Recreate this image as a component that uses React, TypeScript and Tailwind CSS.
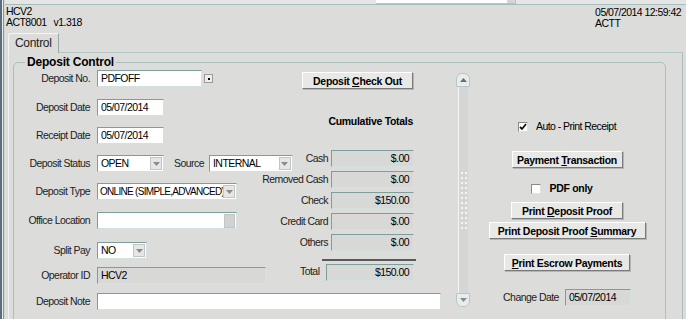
import React from "react";

const sunken =
  "border border-t-[#7d9e9a] border-l-[#7d9e9a] border-b-[#d3e2e0] border-r-[#d3e2e0]";
const raised =
  "border border-t-[#ffffff] border-l-[#ffffff] border-b-[#7a7a7a] border-r-[#7a7a7a] shadow-[1px_1px_0_#b5b5b5]";

function Arrow() {
  return (
    <svg width="7" height="4" viewBox="0 0 7 4">
      <path d="M0 0h7L3.5 4z" fill="#8a8a8a" />
    </svg>
  );
}

function Box({
  className,
  value,
  arrow,
  stub,
  gray,
  right,
  tight,
}: {
  className: string;
  value?: string;
  arrow?: boolean;
  stub?: boolean;
  gray?: boolean;
  right?: boolean;
  tight?: boolean;
}) {
  const pad = right ? "text-right pr-[4px]" : tight ? "pl-[2px]" : "pl-[3px]";
  return (
    <div
      className={`${className} h-[17px] ${sunken} ${
        gray ? "bg-[#d8d9d7]" : "bg-white"
      } flex items-center`}
    >
      <span
        className={`flex-1 min-w-0 whitespace-nowrap overflow-hidden leading-[15px] ${pad} ${
          tight ? "text-[10px] tracking-[-0.7px]" : ""
        }`}
      >
        {value}
      </span>
      {arrow && (
        <div className="shrink-0 w-[12px] h-[13px] mr-[1px] bg-[#e6e6e6] border border-[#c4c4c4] flex items-center justify-center">
          <Arrow />
        </div>
      )}
      {stub && (
        <div className="shrink-0 w-[11px] h-[14px] mr-[1px] bg-[#d2d2d2] border border-[#c4c4c4]" />
      )}
    </div>
  );
}

function Row({
  label,
  className,
  children,
}: {
  label: string;
  className?: string;
  children: React.ReactNode;
}) {
  return (
    <div className={`flex items-center h-[17px] ${className ?? ""}`}>
      <div className="w-[76px] text-right whitespace-nowrap text-[#222]">
        {label}
      </div>
      <div className="ml-[7px] flex items-center">{children}</div>
    </div>
  );
}

function Total({
  label,
  value,
  className,
}: {
  label: string;
  value: string;
  className?: string;
}) {
  return (
    <div className={`flex items-center h-[17px] ${className ?? ""}`}>
      <div className="w-[28px] flex justify-end whitespace-nowrap text-[#222]">
        {label}
      </div>
      <Box className="ml-[3px] w-[83px]" value={value} gray right />
    </div>
  );
}

function Button({
  className,
  children,
}: {
  className: string;
  children: React.ReactNode;
}) {
  return (
    <div
      className={`${className} h-[17px] ${raised} bg-[#e8e8e6] flex items-center justify-center font-bold tracking-[-0.3px] whitespace-nowrap leading-[14px]`}
    >
      {children}
    </div>
  );
}

function Check({ checked }: { checked?: boolean }) {
  return (
    <div className="w-[10px] h-[10px] bg-white border border-t-[#8a8a8a] border-l-[#8a8a8a] border-b-[#e0e0e0] border-r-[#e0e0e0] flex items-center justify-center">
      {checked && (
        <svg width="8" height="8" viewBox="0 0 8 8">
          <path d="M1 4l2 2 4-5" stroke="#111" strokeWidth="1.8" fill="none" />
        </svg>
      )}
    </div>
  );
}

export default function App() {
  return (
    <div className="w-[686px] h-[319px] overflow-hidden bg-[#dcdcda] flex font-['Liberation_Sans',Arial,sans-serif] text-[10.5px] tracking-[-0.55px] text-black">
      {/* window edge */}
      <div className="flex h-full shrink-0">
        <div className="w-[2px] bg-[#5e6d7a]" />
        <div className="w-[1px] bg-[#e9ecec]" />
        <div className="w-[1px] bg-[#8494a0]" />
        <div className="w-[1px] bg-[#cfd9d8]" />
      </div>

      <div className="flex-1 flex flex-col min-h-0">
        {/* top strip */}
        <div className="shrink-0 h-[5px] bg-[#e3e6e5] border-b border-[#a6bcba] flex">
          <div className="ml-[371px] w-[140px] h-[4px] bg-white border-r border-b border-[#b5c6c4] flex justify-end">
            <div className="w-[8px] bg-[#d4d6d5]" />
          </div>
        </div>

        {/* header */}
        <div className="shrink-0 h-[28px] flex justify-between leading-[11px]">
          <div className="pl-[1px] pt-[1px]">
            <div>HCV2</div>
            <div>ACT8001&nbsp;&nbsp;&nbsp;v1.318</div>
          </div>
          <div className="pt-[2px] pr-[5px]">
            <div>05/07/2014 12:59:42</div>
            <div>ACTT</div>
          </div>
        </div>

        {/* tabs */}
        <div className="shrink-0 flex h-[20px] ml-[3px] w-[675px]">
          <div className="px-[6px] border-t border-l border-r border-t-[#f4f6f6] border-l-[#f4f6f6] border-r-[#9aa8a7] rounded-tl-[3px] text-[12px] tracking-[-0.3px] leading-[19px] text-[#222]">
            Control
          </div>
          <div className="flex-1 border-b border-[#b3c7c5]" />
        </div>

        {/* panel */}
        <div className="flex-1 min-h-0 overflow-hidden ml-[3px] w-[675px] border-l border-r border-l-[#f0f3f3] border-r-[#a9bdbb]">
          <fieldset className="ml-[4px] mt-[2px] w-[653px] h-[300px] border border-[#a9c1be] rounded-[5px] pt-[1px]">
            <legend className="ml-[11px] px-[2px] font-bold text-[12px] tracking-[-0.2px] leading-[14px]">
              Deposit Control
            </legend>

            <div className="flex">
              {/* form area */}
              <div className="w-[442px] flex flex-col">
                <div className="flex">
                  {/* left column */}
                  <div className="w-[286px] flex flex-col">
                    <Row label="Deposit No.">
                      <Box className="w-[105px]" value="PDFOFF" />
                      <div className="ml-[2px] w-[9px] h-[9px] bg-[#eeeeee] border border-[#9b9b9b] flex items-center justify-center">
                        <div className="w-[2px] h-[2px] bg-black" />
                      </div>
                    </Row>
                    <Row label="Deposit Date" className="mt-[12px]">
                      <Box className="w-[67px]" value="05/07/2014" />
                    </Row>
                    <Row label="Receipt Date" className="mt-[11px]">
                      <Box className="w-[67px]" value="05/07/2014" />
                    </Row>
                    <Row label="Deposit Status" className="mt-[11px]">
                      <Box className="w-[67px]" value="OPEN" arrow />
                      <span className="ml-[10px] text-[#222]">Source</span>
                      <Box className="ml-[5px] w-[84px]" value="INTERNAL" arrow />
                    </Row>
                    <Row label="Deposit Type" className="mt-[11px]">
                      <Box
                        className="w-[140px]"
                        value="ONLINE (SIMPLE,ADVANCED)"
                        arrow
                        tight
                      />
                    </Row>
                    <Row label="Office Location" className="mt-[12px]">
                      <Box className="w-[140px]" value="" stub />
                    </Row>
                    <Row label="Split Pay" className="mt-[13px]">
                      <Box className="w-[50px]" value="NO" arrow />
                    </Row>
                    <Row label="Operator ID" className="mt-[8px]">
                      <Box className="w-[169px]" value="HCV2" gray />
                    </Row>
                  </div>

                  {/* totals column */}
                  <div className="w-[120px] flex flex-col">
                    <Button className="mt-[2px] ml-[2px] w-[111px]">
                      <span>
                        Deposit <u>C</u>heck Out
                      </span>
                    </Button>
                    <div className="mt-[25px] w-[113px] text-right font-bold tracking-[-0.3px] leading-[14px]">
                      Cumulative Totals
                    </div>
                    <Total label="Cash" value="$.00" className="mt-[22px]" />
                    <Total label="Removed Cash" value="$.00" className="mt-[4px]" />
                    <Total label="Check" value="$150.00" className="mt-[4px]" />
                    <Total label="Credit Card" value="$.00" className="mt-[4px]" />
                    <Total label="Others" value="$.00" className="mt-[4px]" />
                    <div className="mt-[8px] ml-[22px] w-[94px] h-[2px] bg-[#5a5a5a]" />
                    <div className="mt-[2px] flex items-center h-[18px]">
                      <div className="w-[19px] text-right text-[#222]">Total</div>
                      <Box
                        className="ml-[7px] w-[88px]"
                        value="$150.00"
                        gray
                        right
                      />
                    </div>
                  </div>
                </div>

                <Row label="Deposit Note" className="mt-[9px]">
                  <Box className="w-[344px]" value="" />
                </Row>
              </div>

              {/* scrollbar */}
              <div className="mt-[3px] w-[14px] h-[234px] flex flex-col">
                <div className="h-[14px] rounded-t-[6px] bg-[#e8ecec] border border-[#b6c8c6] flex items-center justify-center">
                  <svg width="7" height="4" viewBox="0 0 7 4">
                    <path d="M3.5 0L7 4H0z" fill="#6d6d6d" />
                  </svg>
                </div>
                <div className="flex-1 mx-[2px] bg-[#d4d6d5] border-l border-[#f4f6f6] flex items-center justify-center">
                  <div className="grid grid-cols-2 gap-x-[2px] gap-y-[3px] mt-[20px]">
                    {Array.from({ length: 24 }).map((_, i) => (
                      <div key={i} className="w-[2px] h-[2px] bg-[#f6f6f6]" />
                    ))}
                  </div>
                </div>
                <div className="h-[14px] rounded-b-[6px] bg-[#e8ecec] border border-[#b6c8c6] flex items-center justify-center">
                  <Arrow />
                </div>
              </div>

              {/* actions column */}
              <div className="w-[194px] flex flex-col items-center">
                <div className="mt-[50px] h-[13px] flex items-center">
                  <Check checked />
                  <span className="ml-[8px]">Auto - Print Receipt</span>
                </div>
                <Button className="mt-[18px] w-[111px]">
                  <span>
                    Payment <u>T</u>ransaction
                  </span>
                </Button>
                <div className="mt-[14px] h-[13px] flex items-center -ml-[10px]">
                  <Check />
                  <span className="ml-[8px] font-bold tracking-[-0.3px]">PDF only</span>
                </div>
                <Button className="mt-[7px] w-[112px]">
                  <span>
                    Print <u>D</u>eposit Proof
                  </span>
                </Button>
                <Button className="mt-[3px] w-[157px]">
                  <span>
                    Print Deposit Proof <u>S</u>ummary
                  </span>
                </Button>
                <Button className="mt-[15px] w-[126px]">
                  <span>
                    <u>P</u>rint Escrow Payments
                  </span>
                </Button>
                <div className="mt-[18px] flex items-center h-[17px]">
                  <span className="text-[#222]">Change Date</span>
                  <Box className="ml-[6px] w-[66px]" value="05/07/2014" gray />
                </div>
              </div>
            </div>
          </fieldset>
        </div>
      </div>
    </div>
  );
}
